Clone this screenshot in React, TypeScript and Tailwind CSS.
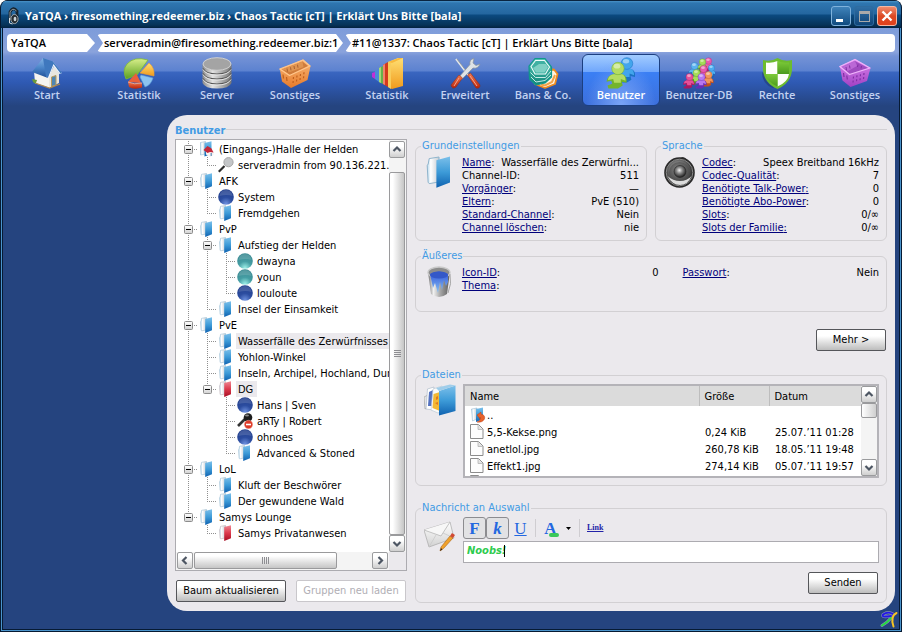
import React from "react";

type IconProps = { children: React.ReactNode };

const SANS = "font-['DejaVu_Sans_Condensed','DejaVu_Sans',sans-serif]";
const HUMAN = "font-['Open_Sans','Noto_Sans',sans-serif]";

/* ---------- shared gradients ---------- */

function Gradients() {
  const v = (id: string, stops: [number, string][], horizontal = false) => (
    <linearGradient id={id} x1="0" y1="0" x2={horizontal ? 1 : 0} y2={horizontal ? 0 : 1}>
      {stops.map(([o, c]) => (
        <stop key={o} offset={o} stopColor={c} />
      ))}
    </linearGradient>
  );
  return (
    <svg width="0" height="0" className="absolute" aria-hidden="true">
      <defs>
        {v("doorBlue", [[0, "#7cc0ea"], [0.5, "#3d9bd8"], [1, "#0f62b0"]])}
        {v("doorRed", [[0, "#ef8a95"], [0.5, "#dc3a4c"], [1, "#a80f24"]])}
        {v("frame", [[0, "#b9d8ec"], [0.3, "#ffffff"], [1, "#c4cbd2"]], true)}
        {v("metal", [[0, "#6e6e6e"], [0.25, "#f0f0f0"], [0.55, "#a8a8a8"], [1, "#5c5c5c"]], true)}
        {v("drum", [[0, "#8b8b8b"], [0.35, "#e2e2e2"], [1, "#757575"]], true)}
        {v("roof", [[0, "#84b4e6"], [0.5, "#4a84c8"], [1, "#1f4f96"]])}
        {v("green", [[0, "#d8ee8a"], [1, "#5aa01e"]])}
        {v("orange", [[0, "#f9b878"], [1, "#e67a2a"]])}
        {v("yellow", [[0, "#ffdf73"], [1, "#f09a1c"]])}
        {v("red", [[0, "#f27a50"], [1, "#b8240c"]])}
        {v("teal", [[0, "#53c4b4"], [1, "#0f8578"]])}
        {v("purple", [[0, "#dd86ee"], [1, "#a040c4"]])}
        {v("shield", [[0, "#7ecb3a"], [1, "#4a9a1c"]])}
        {v("paint", [[0, "#2f50d8"], [1, "#88c4f4"]])}
        {v("paper", [[0, "#ffffff"], [1, "#d2d2d2"]])}
        <radialGradient id="ballBlue" cx="0.5" cy="0.95" r="0.85">
          <stop offset="0" stopColor="#6f92e0" />
          <stop offset="0.5" stopColor="#2c4da0" />
          <stop offset="1" stopColor="#23408e" />
        </radialGradient>
        <radialGradient id="ballTeal" cx="0.5" cy="0.95" r="0.85">
          <stop offset="0" stopColor="#9ff2ea" />
          <stop offset="0.5" stopColor="#459ea4" />
          <stop offset="1" stopColor="#3a8a92" />
        </radialGradient>
        <radialGradient id="cone" cx="0.45" cy="0.4" r="0.6">
          <stop offset="0" stopColor="#f4f4f4" />
          <stop offset="0.4" stopColor="#8c8c8c" />
          <stop offset="1" stopColor="#1c1c1c" />
        </radialGradient>
      </defs>
    </svg>
  );
}

/* ---------- toolbar icons ---------- */

const Svg32 = ({ children }: IconProps) => (
  <svg width="32" height="32" viewBox="0 0 32 32" className="shrink-0" aria-hidden="true">
    {children}
  </svg>
);

const HouseIcon = () => (
  <Svg32>
    <path d="M3 14 12 8 19 20V31L4 26Z" fill="#f6f4ef" />
    <path d="M18 31V19L23 9 28 16V26Z" fill="#e9e6df" />
    <path d="M12 1 22 5 17 21 1 15Z" fill="url(#roof)" />
    <path d="M22 4.500 31 16 28.500 17 22.500 9 18 21 15.500 20Z" fill="#f4f7fb" />
    <path d="M12 1 22 4.500 31 15.500 29.500 16.500 22.500 7 17 20.500 15 20Z" fill="#3f78be" />
    <path d="M20.500 20 25 18.500V28L20.500 29.500Z" fill="#4f86b4" stroke="#b89a5c" strokeWidth="1" />
    <path d="M4 26 18.500 31 29 27" fill="none" stroke="#b08a52" strokeWidth="1.300" />
    <path d="M1 22q1 5 4 4l1-3z" fill="#6c9a3a" />
  </Svg32>
);

const PieIcon = () => (
  <Svg32>
    <path d="M3 22Q-1 13 4 7 11-1 25 3L14 18Z" fill="url(#green)" stroke="#7dba34" strokeWidth=".8" />
    <path d="M17 16 26 6q6 5 5 13Z" fill="url(#yellow)" stroke="#f0a030" strokeWidth=".6" />
    <path d="M18 18 30 21Q28 28 22 30L17 20Z" fill="#8cc4f0" stroke="#5c9cd8" strokeWidth=".6" />
    <path d="M13 16 18 26 5 25Z" fill="#e9603a" />
    <path d="M5 25Q12 28 19 26V30.500Q11 33 6 30Z" fill="url(#red)" />
    <path d="M5 25q6 3 14 1" stroke="#f8b49a" strokeWidth=".8" fill="none" />
  </Svg32>
);

const ServerIcon = () => (
  <Svg32>
    <path d="M1.500 7V26Q4 31.500 16 31.500T30.500 26V7Z" fill="url(#drum)" />
    {[12.5, 17.5, 22.5].map((y) => (
      <g key={y} fill="none">
        <path d={`M2 ${y - 1}Q5 ${y + 4.5} 16 ${y + 4.5}T30 ${y - 1}`} stroke="#555" strokeWidth="1.200" />
        <path d={`M2 ${y}Q5 ${y + 5.5} 16 ${y + 5.5}T30 ${y}`} stroke="#ececec" strokeWidth=".9" />
      </g>
    ))}
    <ellipse cx="16" cy="7" rx="14" ry="6.300" fill="#a4a4a4" stroke="#d0d0d0" strokeWidth="1" />
  </Svg32>
);

const OrangeBasketIcon = () => (
  <Svg32>
    <path d="M.8 12 24 2.500 31.500 9 28.500 23 12 31 3 24.500Z" fill="url(#orange)" />
    <path d="M3 12.500 23.500 4.500 29 9 11 18Z" fill="#cf7c3c" />
    <path d="M3 12.500 23.500 4.500 24.500 10 11 15Z" fill="#e09450" />
    <path d="M8 11.500l.5 3M11.500 10.300l.5 3M15 9l.5 3M18.500 7.700l.5 3" stroke="#a86030" strokeWidth="1" />
    <path d="M.8 12 24 3 31 9 10.500 18.500Z" fill="none" stroke="#ffc68c" strokeWidth="1.300" strokeLinejoin="round" />
    <path d="M14.500 20l-.2 2m-.1 2l-.2 2M18 18.500l-.2 2m-.1 2l-.2 2M21.500 17l-.2 2m-.1 2l-.2 2M25 15.300l-.2 2m-.1 2l-.2 2" stroke="#c05f1c" strokeWidth="1.200" />
    <path d="M4 17.500l.5 4M7.500 20l.5 4" stroke="#c05f1c" strokeWidth="1.200" />
  </Svg32>
);

const PurpleBasketIcon = () => (
  <Svg32>
    <path d="M.8 9.500 16 2 31.500 11 28 24 11.500 30 3.500 23.500Z" fill="url(#purple)" />
    <path d="M3 10 16 4 29 11 10.500 17Z" fill="#a04cc0" />
    <path d="M3 10 16 4 18 9 9 14Z" fill="#bb68d6" />
    <path d="M19 7.500l-.5 2.500M22.500 9l-.5 2.500M7 10l.5 3M10.500 8.500l.5 3" stroke="#8030a4" strokeWidth="1" />
    <path d="M.8 9.500 16 2.500 31 11 10.500 17.500Z" fill="none" stroke="#eeb4fa" strokeWidth="1.300" strokeLinejoin="round" />
    <path d="M14.500 19.500l-.2 2m-.1 2l-.2 2M18 18.300l-.2 2m-.1 2l-.2 2M21.500 17.200l-.2 2m-.1 2l-.2 2M25 16l-.2 2m-.1 2l-.2 2" stroke="#8030a4" strokeWidth="1.200" />
    <path d="M4.500 16l.5 4M7.800 18.500l.5 4" stroke="#8030a4" strokeWidth="1.200" />
  </Svg32>
);

const BooksIcon = () => (
  <Svg32>
    <path d="M1 16 4 15V22L1 20Z" fill="#c22ed8" />
    <path d="M4 14 8 12V25L4 22Z" fill="#4a8ad8" />
    <path d="M8 11 12 9V27L8 25Z" fill="#66b04a" />
    <path d="M8 11 10 10V26L8 25Z" fill="#a4d878" />
    <path d="M12 8 17 5V30L12 27Z" fill="#d43a1c" />
    <path d="M12 8 14 7V28L12 27Z" fill="#f0846a" />
    <path d="M17 5 27 1 32 1V29L21 32 17 30Z" fill="url(#yellow)" />
    <path d="M17 5 20 6V32L17 30Z" fill="#f8cc5c" />
    <path d="M17 5 28 1H32L21 6Z" fill="#f8b83c" />
  </Svg32>
);

const ToolsIcon = () => (
  <Svg32>
    <path d="M7 2 20 19" stroke="#e4e8ea" strokeWidth="2" />
    <path d="M8 2 21 19" stroke="#7c838a" strokeWidth=".7" />
    <path d="M25 1.500q-5 1-4 6L10 20l2.500 2.500L24 11q5 1 7-4l-4 1.500-3-2.500z" fill="#dfe3e6" stroke="#8b9298" strokeWidth=".7" />
    <path d="M10 18 13.500 21 7 30Q3 33 2 28Z" fill="url(#red)" stroke="#8a2b12" strokeWidth=".5" />
    <path d="M18.500 18 21.500 16 31 28Q31 32 27 31Z" fill="url(#red)" stroke="#8a2b12" strokeWidth=".5" />
    <path d="M10 21 5 29M21 19 28 29" stroke="#f3a58c" strokeWidth="1" />
  </Svg32>
);

const HexIcon = () => (
  <Svg32>
    <path d="M20 13 27 12.500 30.500 17 28 27 18 31 8 27Z" fill="#fff3e2" stroke="#ef8a1c" strokeWidth="1.800" strokeLinejoin="round" />
    <path d="M14 27.500 18 28.500 25 25 28 18" fill="none" stroke="#f2a24a" strokeWidth="2" />
    <path d="M2 9 8 1.500H18L24.500 10V20L18 26 9 28 2.500 22Z" fill="url(#teal)" stroke="#11988a" strokeWidth="1.200" strokeLinejoin="round" />
    <path d="M4 9.500 8.500 3.500H17.500L22.500 10 18.500 17H8Z" fill="#3fb0a2" stroke="#eefcfa" strokeWidth="1.100" />
    <path d="M6 11 12 7H19L21 10.500 17.500 15.500H9Z" fill="#7fd0c4" />
    <path d="M3.500 15.500 8.500 20.500H18.500L24 14M4 20 9 25 18 23.500 24 18" fill="none" stroke="#d8f5f0" strokeWidth=".9" />
  </Svg32>
);

const Person = ({ x, y, c, d, s }: { x: number; y: number; c: string; d: string; s: number }) => (
  <g transform={`translate(${x} ${y}) scale(${s})`}>
    <path d="M-4 6Q-10 7-11 14L-6 13-5 16-10 18-9 21 1 21 6 18 5 14 10 15Q11 8 6 6Z" fill={d} />
    <path d="M-4 6Q-9 7-9.500 12L-4 11-3 15 4 15 4 11 9 13Q9 8 6 6Z" fill={c} />
    <circle cx="1" cy="0" r="6.500" fill={c} stroke={d} strokeWidth=".6" />
    <ellipse cx="0" cy="-2.500" rx="3.500" ry="2.500" fill="#fff" opacity=".45" />
  </g>
);

const UsersIcon = () => (
  <Svg32>
    <Person x={21} y={6.5} c="#42a5ec" d="#1c72c4" s={0.9} />
    <Person x={12} y={11.5} c="#b4dc62" d="#74b42c" s={0.95} />
  </Svg32>
);

const CrowdIcon = () => (
  <Svg32>
    <Person x={25} y={4} c="#e65aac" d="#b01c72" s={0.5} />
    <Person x={19} y={5} c="#a4dc58" d="#5a9a1c" s={0.5} />
    <Person x={28} y={11} c="#4cacf0" d="#1c66b4" s={0.5} />
    <Person x={11} y={9} c="#5cb4f0" d="#1e6eb8" s={0.55} />
    <Person x={20} y={12} c="#e65aac" d="#a81862" s={0.55} />
    <Person x={25} y={18} c="#f0965c" d="#c4501c" s={0.55} />
    <Person x={13} y={16} c="#a8dc58" d="#5a9a1c" s={0.55} />
    <Person x={18} y={20} c="#b878f0" d="#6a2cb4" s={0.55} />
    <Person x={6} y={20} c="#e65098" d="#a81862" s={0.55} />
  </Svg32>
);

const ShieldIcon = () => (
  <Svg32>
    <path d="M1 15Q1 27 12 31L17 28Z" fill="#1c3468" opacity=".5" />
    <path d="M2 3Q10 5 16.500 1 23 5 31 3V13Q30 26 16.500 32 3 26 2 13Z" fill="#6cbc2e" />
    <path d="M5 5.500Q11 6.500 16.500 4V17H5Z" fill="#fdfefb" />
    <path d="M16.500 17H28Q27 25 16.500 29.500Z" fill="#fdfefb" />
    <path d="M16.500 4Q22 6.500 28 5.500V17H16.500Z" fill="url(#shield)" />
    <path d="M5 17H16.500V29.500Q6 25 5 17Z" fill="url(#shield)" />
  </Svg32>
);

/* ---------- small icons ---------- */

const DoorIcon = ({ red, large }: { red?: boolean; large?: boolean }) => (
  <svg width={large ? 32 : 16} height={large ? 32 : 16} viewBox="0 0 16 16" className="shrink-0" aria-hidden="true">
    <path
      d="M2.600 1.300 7.500.5V13L2.600 13.800Q1.800 13.300 2 12L1.600 4.800 2.100 4Z"
      fill="url(#frame)"
      stroke={red ? "#b5a3a6" : "#8fb4cc"}
      strokeWidth=".5"
    />
    <path d="M6.200 2.100 13 .2V13.300L6.200 15.900Z" fill={red ? "url(#doorRed)" : "url(#doorBlue)"} />
  </svg>
);

const HomeDoorIcon = () => (
  <svg width="16" height="16" viewBox="0 0 16 16" className="shrink-0" aria-hidden="true">
    <path d="M1.500 1.500 6.500.5V13L1.500 14Z" fill="url(#frame)" stroke="#8fb4cc" strokeWidth=".5" />
    <path d="M5.500 2 12.500 .2V13L5.500 15.500Z" fill="url(#doorBlue)" />
    <path d="M7 10.500V13.500L11 16 14.500 14V10Z" fill="#f7f3f1" />
    <path d="M8.500 5 12.500 7.500 14.500 11.500 11 11 8.500 12 4.500 9Z" fill="#c3283a" />
    <path d="M11.500 12H13v3h-1.500z" fill="#7aa0c4" />
  </svg>
);

const MagnifierIcon = () => (
  <svg width="16" height="16" viewBox="0 0 16 16" className="shrink-0" aria-hidden="true">
    <path d="M.8 14.700 6.500 9" stroke="#2b2b2b" strokeWidth="2.200" />
    <circle cx="10.500" cy="5.200" r="4.600" fill="#c4c6c8" stroke="#a6a6a6" strokeWidth="1" />
  </svg>
);

const BlockedIcon = () => (
  <svg width="16" height="16" viewBox="0 0 16 16" className="shrink-0" aria-hidden="true">
    <path d="M1 13 8 6" stroke="#333" strokeWidth="2.600" />
    <circle cx="11" cy="4.500" r="4.300" fill="#1c1c1c" />
    <ellipse cx="10" cy="2.600" rx="2" ry="1" fill="#8a8a8a" />
    <circle cx="11.500" cy="11.500" r="4.200" fill="#de3a28" stroke="#f6b0a4" strokeWidth=".5" />
    <path d="M9 11.500h5" stroke="#fff" strokeWidth="1.600" />
  </svg>
);

const BallIcon = ({ teal }: { teal?: boolean }) => (
  <svg width="16" height="16" viewBox="0 0 16 16" className="shrink-0" aria-hidden="true">
    <circle cx="8" cy="8" r="7.800" fill={teal ? "url(#ballTeal)" : "url(#ballBlue)"} />
    <path d="M1.500 7Q2 1 8 1T14.500 7Q9 5 1.500 7Z" fill="#fff" opacity=".14" />
  </svg>
);

const SpeakerIcon = () => (
  <Svg32>
    <path d="M14 4Q19-2 23 4L27 10 20 10Z" fill="#3c3c3c" />
    <circle cx="15.500" cy="16.500" r="15.300" fill="#2a2a2a" />
    <circle cx="15.500" cy="16.500" r="13.300" fill="url(#cone)" stroke="#8a8a8a" strokeWidth="1" />
    <circle cx="15.500" cy="16.500" r="10.500" fill="#4a4a4a" opacity=".6" />
    <path d="M3.500 20Q8 29 16 29T27.500 20Q23 25 16 25T3.500 20Z" fill="#dcdcdc" />
    <circle cx="16" cy="15.500" r="6" fill="url(#cone)" stroke="#222" strokeWidth=".6" />
  </Svg32>
);

const BucketIcon = () => (
  <Svg32>
    <path d="M4 6 7 28Q15 34 23 28L26 6Z" fill="url(#metal)" />
    <ellipse cx="15" cy="6.500" rx="11" ry="5.500" fill="#8c8c8c" stroke="#c9c9c9" strokeWidth="1.300" />
    <path d="M6 8Q15 3 24 8V16L22 20 20 14 18 24 16 16 14 27 11 17 9 22Z" fill="url(#paint)" />
    <ellipse cx="15" cy="9" rx="9" ry="3.500" fill="#3458c8" />
    <path d="M26 8Q28 18 24 27" fill="none" stroke="#a6a6a6" strokeWidth="1" />
  </Svg32>
);

const AlbumIcon = () => (
  <Svg32>
    <path d="M0 13 4 11 3 24 1 25Z" fill="#e4e4e4" stroke="#9a9a9a" strokeWidth=".6" />
    <path d="M3.500 5 10 3 10 26 2 25Z" fill="#fff" stroke="#a4b4c4" strokeWidth=".6" />
    <path d="M5 8 9 6V22L4 22Z" fill="#5472c0" />
    <path d="M9 5 18 2V27L14 29 7 26Z" fill="#fafafa" stroke="#b6c4d0" strokeWidth=".6" />
    <path d="M9.500 10 16 8V27L8.500 24Z" fill="#f2b834" />
    <path d="M12 13l2-1v3l-2 1zM11 19l3-1v3z" fill="#e07a1c" />
    <path d="M15 7 31.500 1.500V27L15 31.500Z" fill="url(#doorBlue)" />
    <path d="M15 7 31.500 1.500 26 .5 12 4Z" fill="#9fcdea" />
  </Svg32>
);

const MailIcon = () => (
  <Svg32>
    <path d="M0 9 26 1 30 17 5 26Z" fill="url(#paper)" stroke="#a8a8a8" strokeWidth=".7" />
    <path d="M0 9 17 15 26 1" fill="#f7f7f7" stroke="#bcbcbc" strokeWidth=".9" />
    <path d="M5 26 12 14M30 17 19 12" stroke="#c9c9c9" strokeWidth=".8" />
    <path d="M26 15 29 17 20 27 16 30 17 26Z" fill="#f0a22c" stroke="#a8641c" strokeWidth=".6" />
    <path d="M28 12 31 14 29 17 26 15Z" fill="#d04a34" />
    <path d="M16 30 17 27 18.500 28.500Z" fill="#3a2a1a" />
  </Svg32>
);

const UpIcon = () => (
  <svg width="16" height="16" viewBox="0 0 16 16" className="shrink-0" aria-hidden="true">
    <path d="M.5 2 6 1V12L1.500 14Z" fill="url(#frame)" stroke="#8fb4cc" strokeWidth=".5" />
    <path d="M5 2 12 .5V12L5 15Z" fill="url(#doorBlue)" />
    <path d="M6 8 10 5V7Q14.500 8 13.500 12 11 16 6 15 10 14 9 10V12Z" fill="#e8622a" stroke="#b8401a" strokeWidth=".5" />
  </svg>
);

const FileIcon = () => (
  <svg width="16" height="17" viewBox="0 0 16 17" className="shrink-0" aria-hidden="true">
    <path d="M1.500 1.500H9.500L14 6V15.500H1.500Z" fill="#fdfdfd" stroke="#8c8c8c" />
    <path d="M9 2V6.500H14" fill="#e2e2e2" stroke="#b4b4b4" strokeWidth=".8" />
  </svg>
);

const HeadsetIcon = () => (
  <svg width="14" height="18" viewBox="0 0 14 18" className="shrink-0" aria-hidden="true">
    <path d="M3 14V5Q6-1 10 4V13" fill="none" stroke="#16222c" strokeWidth="2.800" />
    <path d="M3 13V5Q5.500 0 9.500 4" fill="none" stroke="#8d98a0" strokeWidth="1" />
    <ellipse cx="7.500" cy="12" rx="3.600" ry="4.600" fill="#262c30" stroke="#aab2b8" strokeWidth=".9" />
    <ellipse cx="8" cy="12" rx="1.400" ry="2.200" fill="#cbd3d8" />
    <path d="M2.500 11v5l3 1" fill="none" stroke="#d6dadc" strokeWidth="1" />
  </svg>
);

const SignetIcon = () => (
  <svg width="18" height="18" viewBox="0 0 18 18" aria-hidden="true">
    <g fill="none" strokeLinecap="round">
      <path d="M13 3Q8 0 3 3.500 1 7 11 5M11 7Q8 11 2 14.500" stroke="#7f8cb0" strokeWidth="3" />
      <path d="M13 3Q8 0 3 3.500 1 7 11 5" stroke="#2317e8" strokeWidth="1.800" />
      <path d="M11 7Q8 11 2 14.500" stroke="#21e03c" strokeWidth="1.800" />
      <path d="M16.500 2Q10 5 13.500 15.500" stroke="#f6c425" strokeWidth="2" />
    </g>
  </svg>
);

/* ---------- scroll bars ---------- */

const arrows = {
  up: "M1.500 6 5 2.500 8.500 6",
  down: "M1.500 3 5 6.500 8.500 3",
  left: "M6.500 1 3 4.500 6.500 8",
  right: "M3.500 1 7 4.500 3.500 8",
};

const ScrollButton = ({ dir }: { dir: keyof typeof arrows }) => (
  <button
    type="button"
    aria-label={`scroll ${dir}`}
    className="flex h-[17px] w-4 shrink-0 items-center justify-center rounded-xs border border-[#9a9b9d] bg-linear-to-b from-white from-30% to-[#cfcfcf]"
  >
    <svg width="10" height="9" viewBox="0 0 10 9" aria-hidden="true">
      <path d={arrows[dir]} fill="none" stroke="#4d5663" strokeWidth="2.200" />
    </svg>
  </button>
);

/* ---------- channel tree ---------- */

type NodeIcon = "home" | "door" | "red" | "search" | "blue" | "teal" | "blocked";
type TreeNode = { label: string; icon: NodeIcon; marked?: boolean; children?: TreeNode[] };

const tree: TreeNode[] = [
  {
    label: "(Eingangs-)Halle der Helden",
    icon: "home",
    children: [{ label: "serveradmin from 90.136.221.8", icon: "search" }],
  },
  {
    label: "AFK",
    icon: "door",
    children: [
      { label: "System", icon: "blue" },
      { label: "Fremdgehen", icon: "door" },
    ],
  },
  {
    label: "PvP",
    icon: "door",
    children: [
      {
        label: "Aufstieg der Helden",
        icon: "door",
        children: [
          { label: "dwayna", icon: "teal" },
          { label: "youn", icon: "teal" },
          { label: "louloute", icon: "blue" },
        ],
      },
      { label: "Insel der Einsamkeit", icon: "door" },
    ],
  },
  {
    label: "PvE",
    icon: "door",
    children: [
      { label: "Wasserfälle des Zerwürfnisses", icon: "door", marked: true },
      { label: "Yohlon-Winkel", icon: "door" },
      { label: "Inseln, Archipel, Hochland, Dun", icon: "door" },
      {
        label: "DG",
        icon: "red",
        marked: true,
        children: [
          { label: "Hans | Sven", icon: "blue" },
          { label: "aRTy | Robert", icon: "blocked" },
          { label: "ohnoes", icon: "blue" },
          { label: "Advanced & Stoned", icon: "door" },
        ],
      },
    ],
  },
  {
    label: "LoL",
    icon: "door",
    children: [
      { label: "Kluft der Beschwörer", icon: "door" },
      { label: "Der gewundene Wald", icon: "door" },
    ],
  },
  {
    label: "Samys Lounge",
    icon: "door",
    children: [{ label: "Samys Privatanwesen", icon: "red" }],
  },
];

const nodeIcons: Record<NodeIcon, React.ReactNode> = {
  home: <HomeDoorIcon />,
  door: <DoorIcon />,
  red: <DoorIcon red />,
  search: <MagnifierIcon />,
  blue: <BallIcon />,
  teal: <BallIcon teal />,
  blocked: <BlockedIcon />,
};

const Guide = ({ up, down, across, box }: { up?: boolean; down?: boolean; across?: boolean; box?: boolean }) => (
  <svg width="19" height="16" viewBox="0 0 19 16" className="shrink-0" aria-hidden="true">
    <g stroke="#8f8f8f" strokeDasharray="1 1">
      {up && <path d="M9.500 0V8" />}
      {down && <path d="M9.500 8V16" />}
      {across && <path d="M9 8.500H19" />}
    </g>
    {box && (
      <g>
        <rect x="5.500" y="4.500" width="8" height="8" rx="1" fill="url(#paper)" stroke="#8c8c8c" />
        <path d="M7 8.500H12" stroke="#000" />
      </g>
    )}
  </svg>
);

function Branch({ nodes, trail }: { nodes: TreeNode[]; trail: boolean[] }) {
  return (
    <ul role={trail.length ? "group" : "tree"} aria-label={trail.length ? undefined : "Benutzer"}>
      {nodes.map((n, i) => {
        const last = i === nodes.length - 1;
        return (
          <li key={n.label} role="treeitem" aria-selected={!!n.marked}>
            <div className="flex h-4 items-center whitespace-nowrap">
              {trail.map((open, k) => (
                <Guide key={k} up={open} down={open} />
              ))}
              <Guide up down={!last} across box={!!n.children} />
              <span className="flex w-[19px] shrink-0 pl-px">{nodeIcons[n.icon]}</span>
              <span className={`pt-0.5 pl-0.5 leading-[14px] ${n.marked ? "bg-[#ebe9ed] pr-1" : ""}`}>{n.label}</span>
            </div>
            {n.children && <Branch nodes={n.children} trail={[...trail, !last]} />}
          </li>
        );
      })}
    </ul>
  );
}

/* ---------- form parts ---------- */

const GroupBox = ({ title, className, children }: { title: string; className: string; children: React.ReactNode }) => (
  <fieldset className={`min-w-0 rounded-md border border-[#d2d0d3] pr-[7px] pl-2 ${className}`}>
    <legend className="ml-[-3px] px-px leading-[14px] text-[#429be4]">{title}</legend>
    {children}
  </fieldset>
);

type Prop = { label: string; value?: string; plain?: boolean; colonInside?: boolean };

const PropRow = ({ label, value, plain, colonInside }: Prop) => (
  <div className="flex justify-between gap-1 leading-[13px] whitespace-nowrap">
    <dt>
      {plain ? (
        label
      ) : (
        <a href="#" className="text-[#00007b] underline">
          {label}
          {colonInside && ":"}
        </a>
      )}
      {!colonInside && ":"}
    </dt>
    <dd>{value}</dd>
  </div>
);

const basics: Prop[] = [
  { label: "Name", value: "Wasserfälle des Zerwürfni..." },
  { label: "Channel-ID", value: "511", plain: true },
  { label: "Vorgänger", value: "—" },
  { label: "Eltern", value: "PvE (510)" },
  { label: "Standard-Channel", value: "Nein" },
  { label: "Channel löschen", value: "nie" },
];

const voice: Prop[] = [
  { label: "Codec", value: "Speex Breitband 16kHz" },
  { label: "Codec-Qualität", value: "7" },
  { label: "Benötigte Talk-Power", value: "0", colonInside: true },
  { label: "Benötigte Abo-Power", value: "0" },
  { label: "Slots", value: "0/∞" },
  { label: "Slots der Familie", value: "0/∞", colonInside: true },
];

const files = [
  ["5,5-Kekse.png", "0,24 KiB", "25.07.’11 01:28"],
  ["anetlol.jpg", "260,78 KiB", "18.05.’11 19:48"],
  ["Effekt1.jpg", "274,14 KiB", "05.07.’11 19:57"],
  ["", "", ""],
];

const PushButton = ({ className, disabled, children }: { className: string; disabled?: boolean; children: React.ReactNode }) => (
  <button
    type="button"
    disabled={disabled}
    className={`h-[22px] rounded-xs border text-center whitespace-nowrap ${
      disabled
        ? "border-[#c9c7cb] bg-white text-[#b0aeb4]"
        : "border-[#55565a] bg-linear-to-b from-white from-30% to-[#bdbdbd] text-black"
    } ${className}`}
  >
    {children}
  </button>
);

/* ---------- navigation ---------- */

const nav: { label: string; icon: React.ReactNode; gap?: boolean; active?: boolean }[] = [
  { label: "Start", icon: <HouseIcon /> },
  { label: "Statistik", icon: <PieIcon />, gap: true },
  { label: "Server", icon: <ServerIcon /> },
  { label: "Sonstiges", icon: <OrangeBasketIcon /> },
  { label: "Statistik", icon: <BooksIcon />, gap: true },
  { label: "Erweitert", icon: <ToolsIcon /> },
  { label: "Bans & Co.", icon: <HexIcon /> },
  { label: "Benutzer", icon: <UsersIcon />, active: true },
  { label: "Benutzer-DB", icon: <CrowdIcon /> },
  { label: "Rechte", icon: <ShieldIcon /> },
  { label: "Sonstiges", icon: <PurpleBasketIcon /> },
];

function TitleBar() {
  const ctl = "flex size-5 items-center justify-center rounded-[3px] border";
  return (
    <header className="flex h-7 shrink-0 items-center justify-between border-t border-[#0a2540] bg-[linear-gradient(180deg,#4a93c8_0,#2f76b0_2px,#24669f_13px,#0b4a80_14px,#063358_24px,#021c36_28px)] pr-1 pl-1.5">
      <div className="flex items-center gap-1 pt-0.5">
        <HeadsetIcon />
        <h1 className={`${HUMAN} text-[11px] leading-4 font-bold text-white`}>
          YaTQA › firesomething.redeemer.biz › Chaos Tactic [cT] | Erklärt Uns Bitte [bala]
        </h1>
      </div>
      <div className="flex gap-[3px] pt-[3px]">
        <button type="button" aria-label="Minimieren" className={`${ctl} border-[#7fb2dc] bg-linear-to-b from-[#3f83ba] to-[#0f4b80]`}>
          <span className="mt-2 mr-1 h-[3px] w-[7px] bg-white" />
        </button>
        <button type="button" aria-label="Maximieren" className={`${ctl} border-[#2f6ca0] bg-linear-to-b from-[#2f6fa6] to-[#0f4578]`}>
          <span className="size-[11px] border border-t-[3px] border-[#a9a9a9]" />
        </button>
        <button type="button" aria-label="Schließen" className={`${ctl} border-[#f4b8a4] bg-linear-to-b from-[#ee8a6c] via-[#dc4a24] to-[#e0401c]`}>
          <svg width="12" height="12" viewBox="0 0 12 12" aria-hidden="true">
            <path d="M1.500 1.500 10.500 10.500M10.500 1.500 1.500 10.500" stroke="#fff" strokeWidth="2.400" />
          </svg>
        </button>
      </div>
    </header>
  );
}

export default function App() {
  const fmt = "flex h-[22px] w-[23px] items-center justify-center font-['Liberation_Serif',serif] text-[17px] leading-none text-[#2468e0]";
  return (
    <div className={`flex min-h-screen flex-col overflow-hidden rounded-t-lg bg-[#061a33] text-[11px] text-black ${SANS}`}>
      <Gradients />
      <div className="flex grow flex-col overflow-hidden rounded-t-lg border-x border-b border-[#061a33]">
        <TitleBar />
        <div className="flex grow flex-col border-x border-b border-[#4a94cc] bg-[#061a33] px-px pb-px">
          <div className="flex grow flex-col bg-[#25447f]">
            <div className="bg-[linear-gradient(180deg,#7d9cda_0,#8aa3dc_24px,#7593d6_28px,#5c82d0_43px,#3a66c0_44px,#2f5ab4_54px,#25447f_78px)]">
              <nav aria-label="Pfad" className={`flex h-6 items-end gap-[2px] pr-1 pl-1 font-semibold ${HUMAN}`}>
                <a href="#" className="h-[18px] w-[88px] rounded-l bg-white pl-1 leading-[18px] [clip-path:polygon(0_0,calc(100%_-_8px)_0,100%_50%,calc(100%_-_8px)_100%,0_100%)]">
                  YaTQA
                </a>
                <a
                  href="#"
                  className="h-[18px] w-[246px] overflow-hidden rounded-l bg-white pl-[7px] leading-[18px] whitespace-nowrap [clip-path:polygon(0_0,calc(100%_-_7px)_0,100%_50%,calc(100%_-_7px)_100%,0_100%,6px_50%)]"
                >
                  serveradmin@firesomething.redeemer.biz:1
                </a>
                <a href="#" className="h-[18px] grow rounded bg-white pl-[7px] leading-[18px] [clip-path:polygon(0_0,100%_0,100%_100%,0_100%,6px_50%)]">
                  #11@1337: Chaos Tactic [cT] | Erklärt Uns Bitte [bala]
                </a>
              </nav>
              <nav aria-label="Bereiche" className={`flex h-[58px] pt-0.5 pr-1 pl-[5px] ${HUMAN}`}>
                {nav.map((n, i) => (
                  <button
                    key={i}
                    type="button"
                    className={`flex h-[52px] w-[78px] shrink-0 flex-col items-center pt-0.5 text-[11px] leading-3 font-semibold ${n.gap ? "ml-3.5" : ""} ${
                      n.active
                        ? "rounded-md border border-[#1c3f80] bg-[radial-gradient(ellipse_at_50%_100%,#7aa4f6_0,transparent_65%),linear-gradient(180deg,#a2ccff_0,#6fa6fc_34%,#3b7ff4_35%,#3c6fdc_100%)] text-white"
                        : "border border-transparent text-[#c3d2f1]"
                    }`}
                  >
                    {n.icon}
                    {n.label}
                  </button>
                ))}
              </nav>
            </div>

            <main className="mt-[5px] mr-1 ml-[164px] rounded-[20px] bg-[#ebe9ed] p-2">
              <div className="flex h-4 items-center gap-px">
                <h2 className="text-[11px] leading-[14px] font-bold text-[#429be4]">Benutzer</h2>
                <span className="mb-1 h-px grow bg-[#d2d0d3]" />
              </div>
              <div className="grid grid-cols-[232px_minmax(0,1fr)] gap-2">
                <section>
                  <div className="grid grid-cols-[minmax(0,1fr)_17px] border border-[#acabb0] bg-white">
                    <div className="h-[412px] overflow-hidden pt-px pl-[3px]">
                      <Branch nodes={tree} trail={[]} />
                    </div>
                    <div className="flex flex-col bg-[#f4f4f4] pt-px">
                      <ScrollButton dir="up" />
                      <div className="mt-[14px] flex w-4 grow flex-col items-center justify-center gap-px rounded-xs border border-[#9a9a9c] bg-linear-to-r from-white from-20% to-[#c6c6c6]">
                        {[0, 1, 2, 3].map((k) => (
                          <span key={k} className="h-px w-[7px] bg-[#8e8e92]" />
                        ))}
                      </div>
                      <ScrollButton dir="down" />
                    </div>
                    <div className="flex h-[18px] bg-[#f4f4f4] pr-px pl-px">
                      <ScrollButton dir="left" />
                      <div className="ml-px flex h-[17px] w-[143px] items-center justify-center gap-px rounded-xs border border-[#9a9a9c] bg-linear-to-b from-white from-20% to-[#c6c6c6]">
                        {[0, 1, 2, 3].map((k) => (
                          <span key={k} className="h-[7px] w-px bg-[#8e8e92]" />
                        ))}
                      </div>
                      <span className="grow" />
                      <ScrollButton dir="right" />
                    </div>
                    <div className="bg-[#ebe9ed]" />
                  </div>
                  <div className="mt-[9px] flex gap-2.5">
                    <PushButton className="ml-px w-[110px]">Baum aktualisieren</PushButton>
                    <PushButton className="w-[110px]" disabled>
                      Gruppen neu laden
                    </PushButton>
                  </div>
                </section>

                <section className="flex flex-col">
                  <div className="grid grid-cols-2 gap-2">
                    <GroupBox title="Grundeinstellungen" className="pt-[3px] pb-1.5">
                      <div className="flex gap-1.5">
                        <DoorIcon large />
                        <dl className="min-w-0 grow">
                          {basics.map((p) => (
                            <PropRow key={p.label} {...p} />
                          ))}
                        </dl>
                      </div>
                    </GroupBox>
                    <GroupBox title="Sprache" className="pt-[3px] pb-1.5">
                      <div className="flex gap-1.5">
                        <SpeakerIcon />
                        <dl className="min-w-0 grow">
                          {voice.map((p) => (
                            <PropRow key={p.label} {...p} />
                          ))}
                        </dl>
                      </div>
                    </GroupBox>
                  </div>

                  <GroupBox title="Äußeres" className="mt-2 pt-[3px] pb-[13px]">
                    <div className="flex gap-1.5">
                      <BucketIcon />
                      <dl className="grid grow grid-cols-2 content-start gap-x-6">
                        <PropRow label="Icon-ID" value="0" />
                        <PropRow label="Passwort" value="Nein" />
                        <PropRow label="Thema" />
                      </dl>
                    </div>
                  </GroupBox>

                  <PushButton className="mt-[17px] mr-px w-[70px] self-end">Mehr &gt;</PushButton>

                  <GroupBox title="Dateien" className="mt-[17px] pt-[2px] pb-[7px]">
                    <div className="flex gap-[7px]">
                      <AlbumIcon />
                      <div className="flex h-[94px] grow overflow-hidden border-2 border-[#b4b3b8] bg-white">
                        <div className="grow overflow-hidden">
                          <table className="w-full table-fixed border-collapse text-left">
                            <thead className="bg-[#dbdbdb]">
                              <tr className="h-5">
                                <th className="pt-0.5 pl-[5px] font-normal">Name</th>
                                <th className="w-[70px] border-l border-[#bdbdbd] pt-0.5 pl-[5px] font-normal">Größe</th>
                                <th className="w-[92px] border-l border-[#bdbdbd] pt-0.5 pl-[5px] font-normal">Datum</th>
                              </tr>
                            </thead>
                            <tbody className="leading-[15px] whitespace-nowrap">
                              <tr>
                                <td colSpan={3}>
                                  <span className="flex h-[17px] items-center pl-[6px]">
                                    <UpIcon />
                                    <span className="pt-0.5">..</span>
                                  </span>
                                </td>
                              </tr>
                              {files.map(([name, size, date]) => (
                                <tr key={name}>
                                  <td>
                                    <span className="flex h-[17px] items-center pl-1">
                                      <FileIcon />
                                      <span className="pt-0.5 pl-0.5">{name}</span>
                                    </span>
                                  </td>
                                  <td className="pt-0.5 pl-[6px]">{size}</td>
                                  <td className="pt-0.5 pl-[6px]">{date}</td>
                                </tr>
                              ))}
                            </tbody>
                          </table>
                        </div>
                        <div className="flex flex-col bg-[#f4f4f4]">
                          <ScrollButton dir="up" />
                          <div className="h-[15px] w-4 rounded-xs border border-[#9a9a9c] bg-linear-to-r from-white to-[#cfcfcf]" />
                          <span className="grow" />
                          <ScrollButton dir="down" />
                        </div>
                      </div>
                    </div>
                  </GroupBox>

                  <GroupBox title="Nachricht an Auswahl" className="mt-[15px] pt-[2px] pb-2">
                    <div className="flex gap-[7px]">
                      <span className="pt-1">
                        <MailIcon />
                      </span>
                      <div className="flex grow flex-col">
                        <div className="flex items-center">
                          <button type="button" className={`${fmt} rounded-[3px] border border-[#8c8c90] bg-[#e2e2e4] font-bold`}>
                            F
                          </button>
                          <button type="button" className={`${fmt} rounded-[3px] border border-[#8c8c90] bg-[#e2e2e4] font-bold italic`}>
                            k
                          </button>
                          <button type="button" className={`${fmt} underline`}>
                            U
                          </button>
                          <span className="mx-[3px] h-[18px] w-px bg-[#cfcdd1]" />
                          <button type="button" aria-label="Farbe" className="flex h-[22px] w-[37px] items-center justify-center gap-[7px]">
                            <span className="flex items-end font-['Liberation_Serif',serif] text-[17px] leading-none font-bold text-[#2468e0]">
                              A<span className="-ml-2 h-1 w-[10px] rounded-xs bg-[#3bc85a]" />
                            </span>
                            <svg width="5" height="3" viewBox="0 0 5 3" aria-hidden="true">
                              <path d="M0 0H5L2.500 3Z" />
                            </svg>
                          </button>
                          <span className="mx-[3px] h-[18px] w-px bg-[#cfcdd1]" />
                          <a href="#" className="pl-1 font-['Liberation_Serif',serif] text-[8px] leading-3 font-bold text-[#2222a8] underline">
                            Link
                          </a>
                        </div>
                        <div className="relative mt-[2px]">
                          <input
                            type="text"
                            aria-label="Nachricht an Auswahl"
                            defaultValue="Noobs!"
                            className="block h-[22px] w-full border border-[#acabb0] bg-white pb-1 pl-[3px] font-bold text-[#2ecb4e] italic outline-none"
                          />
                          <span className="absolute top-1 left-[41px] h-3 w-px bg-black" />
                        </div>
                        <PushButton className="mt-[9px] mr-px w-[70px] self-end">Senden</PushButton>
                      </div>
                    </div>
                  </GroupBox>
                </section>
              </div>
            </main>
            <footer className="flex grow justify-end pr-px">
              <SignetIcon />
            </footer>
          </div>
        </div>
      </div>
    </div>
  );
}
